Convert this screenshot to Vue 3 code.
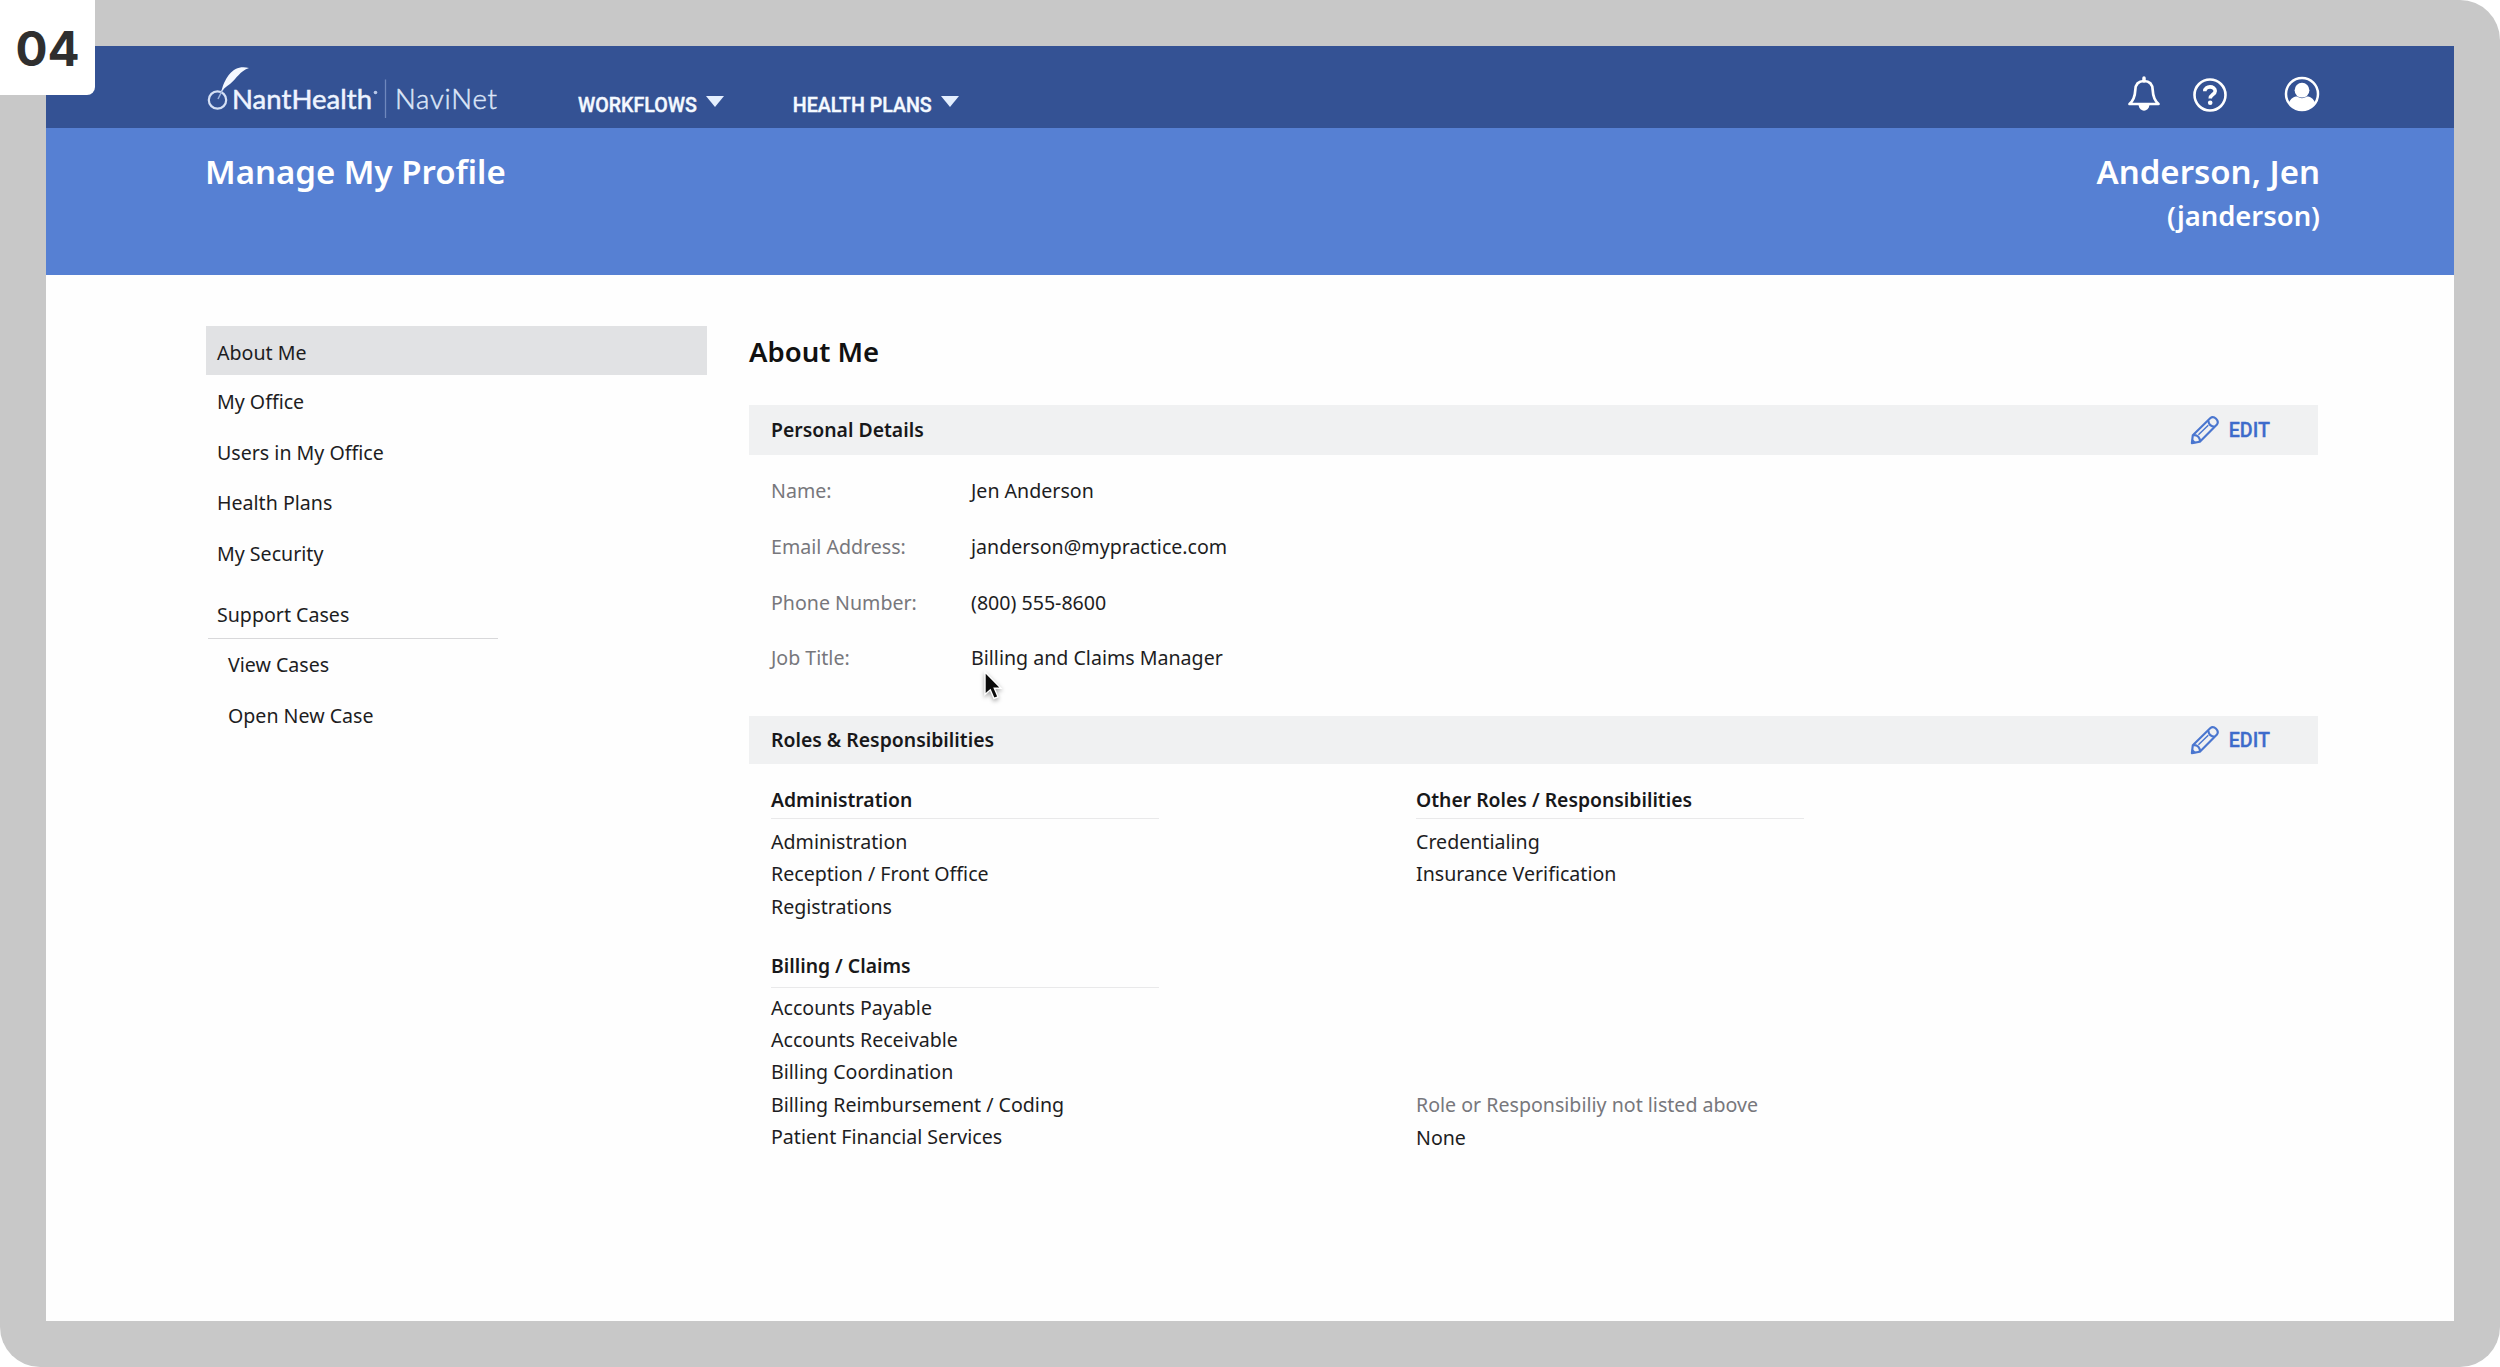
<script setup>
import { ref } from 'vue'

const menus = ['WORKFLOWS', 'HEALTH PLANS']

const links = ['About Me', 'My Office', 'Users in My Office', 'Health Plans', 'My Security']
const caseLinks = ['View Cases', 'Open New Case']
const active = ref('About Me')

const details = [
  { label: 'Name:', value: 'Jen Anderson' },
  { label: 'Email Address:', value: 'janderson@mypractice.com' },
  { label: 'Phone Number:', value: '(800) 555-8600' },
  { label: 'Job Title:', value: 'Billing and Claims Manager' },
]

const admin = ['Administration', 'Reception / Front Office', 'Registrations']
const billing = [
  'Accounts Payable',
  'Accounts Receivable',
  'Billing Coordination',
  'Billing Reimbursement / Coding',
  'Patient Financial Services',
]
const other = ['Credentialing', 'Insurance Verification']
</script>

<template>
  <div class="frame">
    <div class="step">04</div>
    <div class="screen">
      <header class="topbar">
        <svg class="logo" width="296" height="60" viewBox="0 0 296 60">
          <circle cx="11.500" cy="41" r="8.700" fill="none" stroke="#d5e0f5" stroke-width="2.200" />
          <path d="M12 40 L17 30" stroke="#9db2dc" stroke-width="1.500" />
          <path d="M16 30 C20 17 28 5 43 9 C34 12 31 19 24 25 C20 28 17 30 15 33 Z" fill="#f4f8ff" />
          <text class="brand" x="26" y="50" textLength="140">NantHealth</text>
          <circle cx="169.500" cy="33.500" r="1.800" fill="#b9c8e8" />
          <path d="M179.500 20.500 V59" stroke="#6f88bd" stroke-width="1.300" />
          <text class="product" x="189" y="50" textLength="102">NaviNet</text>
        </svg>
        <nav class="menus">
          <a v-for="m in menus" :key="m" class="menu">
            {{ m }}
            <svg width="18" height="11" viewBox="0 0 18 11"><path d="M0 0 H18 L9 11 Z" fill="#e4efff" /></svg>
          </a>
        </nav>
        <div class="tools">
          <svg width="34" height="36" viewBox="0 0 34 36">
            <path d="M17 2 V5" stroke="#fff" stroke-width="3.500" stroke-linecap="round" />
            <path
              d="M17 5 C11 5 8.500 9 8.300 14 C8 21 6.500 24.500 2.500 28 H31.500 C27.500 24.500 26 21 25.700 14 C25.500 9 23 5 17 5 Z"
              fill="none" stroke="#fff" stroke-width="2.700" stroke-linejoin="round"
            />
            <path d="M11.500 29 H22.500 C21.500 36.500 12.500 36.500 11.500 29 Z" fill="#fff" />
          </svg>
          <svg class="help" width="36" height="36" viewBox="0 0 36 36">
            <circle cx="18" cy="18" r="15.500" fill="none" stroke="#fff" stroke-width="2.600" />
            <path
              d="M12.800 14.300 C12.800 8.500 23.200 8.500 23.200 14 C23.200 17.500 18.200 17.500 18.200 21.500"
              fill="none" stroke="#fff" stroke-width="3.600"
            />
            <circle cx="18.200" cy="25.800" r="2.300" fill="#fff" />
          </svg>
          <svg width="36" height="36" viewBox="0 0 36 36">
            <circle cx="18" cy="18" r="16" fill="none" stroke="#fff" stroke-width="2.500" />
            <circle cx="18" cy="14.200" r="7.400" fill="#fff" />
            <path d="M5 27 C6.500 22 11 20.300 13.500 20.600 C16 22.800 20 22.800 22.500 20.600 C25 20.300 29.500 22 31 27 C24.500 37 11.500 37 5 27 Z" fill="#fff" />
          </svg>
        </div>
      </header>

      <section class="banner">
        <h1>Manage My Profile</h1>
        <div class="who">
          <div class="fullname">Anderson, Jen</div>
          <div class="login">(janderson)</div>
        </div>
      </section>

      <div class="body">
        <aside class="side">
          <a
            v-for="l in links" :key="l"
            class="link" :class="{ active: l === active }"
            @click="active = l"
          >{{ l }}</a>
          <div class="group">Support Cases</div>
          <a v-for="c in caseLinks" :key="c" class="link sub">{{ c }}</a>
        </aside>

        <main class="main">
          <h2>About Me</h2>

          <div class="bar">
            <span>Personal Details</span>
            <a class="edit">
              <svg width="30" height="30" viewBox="0 0 32 32">
                <g fill="none" stroke="#4a76cf" stroke-width="2.300" stroke-linejoin="round">
                  <path d="M2 30 L3 21.500 L21.500 3.500 C25.500 0 32 6 28.500 10.500 L10.500 28.500 Z" />
                  <path d="M3.500 21.500 C8 21 11 24 10.500 28.500" />
                  <path d="M19.500 6 C20 10 22.500 12.500 26.500 12.500" />
                  <path d="M9 21 L19.500 11" stroke-width="1.600" />
                </g>
                <path d="M1.500 30.500 L2.200 25 L7 29.800 Z" fill="#4a76cf" />
              </svg>
              EDIT
            </a>
          </div>
          <dl class="details">
            <div v-for="d in details" :key="d.label" class="row">
              <dt>{{ d.label }}</dt>
              <dd>{{ d.value }}</dd>
            </div>
          </dl>

          <div class="bar roles-bar">
            <span>Roles &amp; Responsibilities</span>
            <a class="edit">
              <svg width="30" height="30" viewBox="0 0 32 32">
                <g fill="none" stroke="#4a76cf" stroke-width="2.300" stroke-linejoin="round">
                  <path d="M2 30 L3 21.500 L21.500 3.500 C25.500 0 32 6 28.500 10.500 L10.500 28.500 Z" />
                  <path d="M3.500 21.500 C8 21 11 24 10.500 28.500" />
                  <path d="M19.500 6 C20 10 22.500 12.500 26.500 12.500" />
                  <path d="M9 21 L19.500 11" stroke-width="1.600" />
                </g>
                <path d="M1.500 30.500 L2.200 25 L7 29.800 Z" fill="#4a76cf" />
              </svg>
              EDIT
            </a>
          </div>
          <div class="roles">
            <div class="col">
              <h3>Administration</h3>
              <ul>
                <li v-for="r in admin" :key="r">{{ r }}</li>
              </ul>
              <h3 class="second">Billing / Claims</h3>
              <ul class="tight">
                <li v-for="r in billing" :key="r">{{ r }}</li>
              </ul>
            </div>
            <div class="col">
              <h3>Other Roles / Responsibilities</h3>
              <ul>
                <li v-for="r in other" :key="r">{{ r }}</li>
              </ul>
              <div class="unlisted">
                <div class="muted">Role or Responsibiliy not listed above</div>
                <div>None</div>
              </div>
            </div>
          </div>
        </main>
      </div>
    </div>

    <svg class="cursor" width="24" height="34" viewBox="0 0 24 34">
      <path d="M3 2 V24.500 L8.300 19.800 L12 28.500 L16 26.800 L12.300 18.300 H19 Z" fill="#0b0b0b" stroke="#fff" stroke-width="1.400" />
    </svg>
  </div>
</template>

<style>
body {
  margin: 0;
  background: #fff;
}
</style>

<style scoped>
.frame {
  position: relative;
  box-sizing: border-box;
  width: 2500px;
  height: 1367px;
  padding: 46px;
  border-radius: 40px;
  background: #c8c8c8;
  font-family: 'Noto Sans', 'Open Sans', sans-serif;
  font-size: 19.6px;
  color: #1d1d1f;
}
.step {
  position: absolute;
  top: 0;
  left: 0;
  z-index: 2;
  width: 95px;
  height: 95px;
  border-bottom-right-radius: 8px;
  background: #fff;
  color: #2f2f2f;
  font: 700 48px/97px 'Noto Sans', sans-serif;
  font-family: Inter, sans-serif;
  font-size: 47.5px;
  text-align: center;
}
.screen {
  height: 1275px;
  background: #fefefe;
}
.topbar {
  display: flex;
  box-sizing: border-box;
  height: 82px;
  padding: 0 134px 0 160px;
  background: #345294;
}
.logo {
  margin-top: 13px;
}
.brand {
  font: 400 27.5px Lato, sans-serif;
  fill: #eef4ff;
  stroke: #eef4ff;
  stroke-width: 0.5px;
}
.product {
  font: 300 27.5px Lato, sans-serif;
  fill: #dce6f8;
  stroke: #dce6f8;
  stroke-width: 0.5px;
}
.menus {
  display: flex;
  gap: 69px;
  margin-left: 76px;
  padding-top: 41px;
}
.menu {
  display: flex;
  gap: 9px;
  height: 36px;
  color: #f4f9ff;
  font: 500 19.6px/37px Roboto, sans-serif;
  -webkit-text-stroke: 0.4px #f4f9ff;
}
.menu svg {
  margin-top: 9px;
}
.tools {
  display: flex;
  margin-left: auto;
  padding-top: 30px;
}
.help {
  margin: 1px 56px 0 31px;
}
.banner {
  display: flex;
  justify-content: space-between;
  box-sizing: border-box;
  height: 147px;
  padding: 21px 134px 0 159px;
  background: #5680d3;
  color: #fff;
}
h1,
.fullname {
  margin: 0;
  font-size: 33px;
  font-weight: 600;
  line-height: 46px;
}
.login {
  font-size: 27.4px;
  font-weight: 600;
  line-height: 42px;
}
.who {
  text-align: right;
}
.body {
  display: flex;
  gap: 42px;
  padding: 51px 136px 0 160px;
}
.side {
  width: 501px;
}
.link {
  display: block;
  padding-left: 11px;
  line-height: 50.5px;
}
.link.active {
  margin-bottom: 2px;
  padding-top: 5px;
  background: #e1e2e4;
  line-height: 44px;
}
.group {
  width: 281px;
  margin: 12px 0 1px 2px;
  padding-left: 9px;
  border-bottom: 1px solid #d8d8da;
  line-height: 47px;
}
.link.sub {
  padding-left: 22px;
}
.main {
  flex: 1;
}
h2 {
  margin: 4px 0 31px;
  color: #111;
  font-size: 27.5px;
  font-weight: 600;
  line-height: 44px;
}
.bar {
  display: flex;
  justify-content: space-between;
  padding: 0 48px 0 22px;
  background: #f0f1f2;
  color: #18181a;
  font-size: 19.4px;
  font-weight: 600;
  line-height: 50px;
}
.edit {
  display: flex;
  align-items: center;
  gap: 9px;
  color: #3d6bcb;
  font: 500 19.7px/51px Roboto, sans-serif;
  -webkit-text-stroke: 0.3px #3d6bcb;
  height: 50px;
}
.details {
  margin: 8px 0 30px;
  padding-left: 22px;
}
.row {
  display: flex;
  line-height: 55.75px;
}
dt {
  width: 200px;
  color: #77777c;
}
dd {
  margin: 0;
}
.roles-bar {
  line-height: 48px;
}
.roles-bar .edit {
  height: 48px;
  line-height: 49px;
}
.roles {
  display: flex;
  gap: 257px;
  padding: 17px 0 0 22px;
}
.col {
  display: flex;
  flex-direction: column;
  width: 388px;
}
h3 {
  margin: 0;
  border-bottom: 1px solid #e9e9ea;
  color: #18181a;
  font-size: 19.35px;
  font-weight: 600;
  line-height: 37px;
}
.second {
  margin-top: 24px;
  padding-bottom: 3px;
}
ul {
  margin: 7px 0 0;
  padding: 0;
  list-style: none;
  line-height: 32.3px;
}
.tight {
  margin-top: 4px;
}
.unlisted {
  margin: auto 0 -1px;
  line-height: 33px;
}
.muted {
  color: #77777c;
}
.cursor {
  position: absolute;
  top: 670px;
  left: 982px;
  filter: drop-shadow(0 2px 2px rgba(0, 0, 0, 0.35));
}
</style>
